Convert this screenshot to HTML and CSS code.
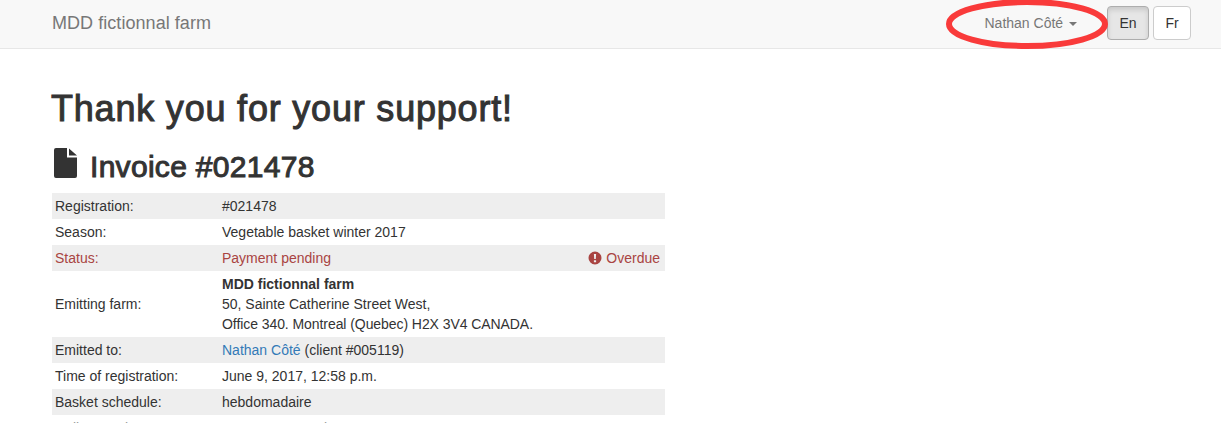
FILE: index.html
```html
<!DOCTYPE html>
<html lang="en">
<head>
<meta charset="utf-8">
<title>Invoice</title>
<link rel="stylesheet" href="styles.css">
</head>
<body>
<nav class="navbar">
  <a class="brand">MDD fictionnal farm</a>
  <div class="nav-right">
    <a class="user">Nathan Côté <span class="caret"></span></a>
    <div class="langs">
      <a class="btn active">En</a>
      <a class="btn">Fr</a>
    </div>
  </div>
  <svg class="ring" width="166" height="50" viewBox="0 0 166 50"><ellipse cx="81" cy="24" rx="78" ry="22"/></svg>
</nav>
<main class="container">
  <h1>Thank you for your support!</h1>
  <h2><svg class="file" width="23" height="30" viewBox="0 0 23 30"><path d="M2 0H13V9.5H23V28a2 2 0 0 1-2 2H2a2 2 0 0 1-2-2V2a2 2 0 0 1 2-2ZM15 0.5L23 7.5H15Z"/></svg>Invoice #021478</h2>
  <table class="invoice">
    <tr><td class="k">Registration:</td><td>#021478</td></tr>
    <tr><td class="k">Season:</td><td>Vegetable basket winter 2017</td></tr>
    <tr class="danger"><td class="k">Status:</td><td><div class="split"><span>Payment pending</span><span class="overdue"><svg width="14" height="14" viewBox="0 0 14 14"><path fill-rule="evenodd" d="M7 .5a6.5 6.5 0 1 0 0 13 6.5 6.5 0 0 0 0-13ZM5.9 3h2.2l-.3 5H6.2ZM5.9 9.2h2.2v2H5.9Z"/></svg>Overdue</span></div></td></tr>
    <tr><td class="k">Emitting farm:</td><td><strong>MDD fictionnal farm</strong><br>50, Sainte Catherine Street West,<br><span class="tight">Office 340. Montreal (Quebec) H2X 3V4 CANADA.</span></td></tr>
    <tr><td class="k">Emitted to:</td><td><a class="link">Nathan Côté</a> (client #005119)</td></tr>
    <tr><td class="k">Time of registration:</td><td>June 9, 2017, 12:58 p.m.</td></tr>
    <tr><td class="k">Basket schedule:</td><td>hebdomadaire</td></tr>
    <tr class="faded"><td class="k">Delivery point:</td><td>Notre-Dame Park</td></tr>
  </table>
</main>
</body>
</html>
```
FILE: styles.css
```css
* { box-sizing: border-box; }
html, body { margin: 0; height: 423px; overflow: hidden; }
body { background: #fff; color: #333; font: 14px/20px "Liberation Sans", Arial, sans-serif; }
.navbar {
  position: relative;
  height: 49px;
  background: #f8f8f8;
  border-bottom: 1px solid #e7e7e7;
  display: flex;
  align-items: center;
  justify-content: space-between;
  padding: 0 30px 2px 52px;
}
.brand { font-size: 18px; color: #777; letter-spacing: .05px; }
.nav-right { display: flex; align-items: center; }
.user { color: #777; margin-right: 30px; }
.caret {
  display: inline-block;
  width: 0; height: 0;
  margin-left: 2px;
  vertical-align: middle;
  border-top: 4px solid #777;
  border-left: 4px solid transparent;
  border-right: 4px solid transparent;
}
.langs { display: flex; gap: 4px; }
.btn {
  width: 38px; height: 34px;
  display: flex; align-items: center; justify-content: center;
  background: #fff;
  border: 1px solid #ccc;
  border-radius: 4px;
  color: #333;
}
.btn.active { width: 42px; background: #e6e6e6; border-color: #adadad; box-shadow: inset 0 3px 5px rgba(0,0,0,.125); }
.ring { position: absolute; left: 946px; top: 0; fill: none; stroke: #f93a3a; stroke-width: 6; }
.container { padding: 0 51px; }
h1 { margin: 40px 0 0; font-size: 36px; line-height: 40px; font-weight: 400; letter-spacing: .8px; -webkit-text-stroke: 1px #333; color: #333; }
h2 { margin: 19px 0 0 1px; height: 36px; display: flex; align-items: center; font-size: 30px; line-height: 33px; font-weight: 400; letter-spacing: .3px; -webkit-text-stroke: 1px #333; }
.file { margin: 0 13px 6px 2px; fill: #333; }
.invoice { width: 613px; margin: 9px 0 0 1px; border-collapse: collapse; }
.invoice tr:nth-child(odd) { background: #eee; }
.invoice td { padding: 3px; vertical-align: middle; line-height: 20px; }
.invoice .k { width: 167px; }
.invoice td + td { padding-left: 3px; padding-right: 5px; }
.tight { letter-spacing: -.07px; }
.danger td { color: #a94442; }
.faded td { color: #999; }
.split { display: flex; justify-content: space-between; }
.overdue { display: flex; align-items: center; gap: 4px; }
.overdue svg { fill: #a94442; }
.link { color: #337ab7; }
```
